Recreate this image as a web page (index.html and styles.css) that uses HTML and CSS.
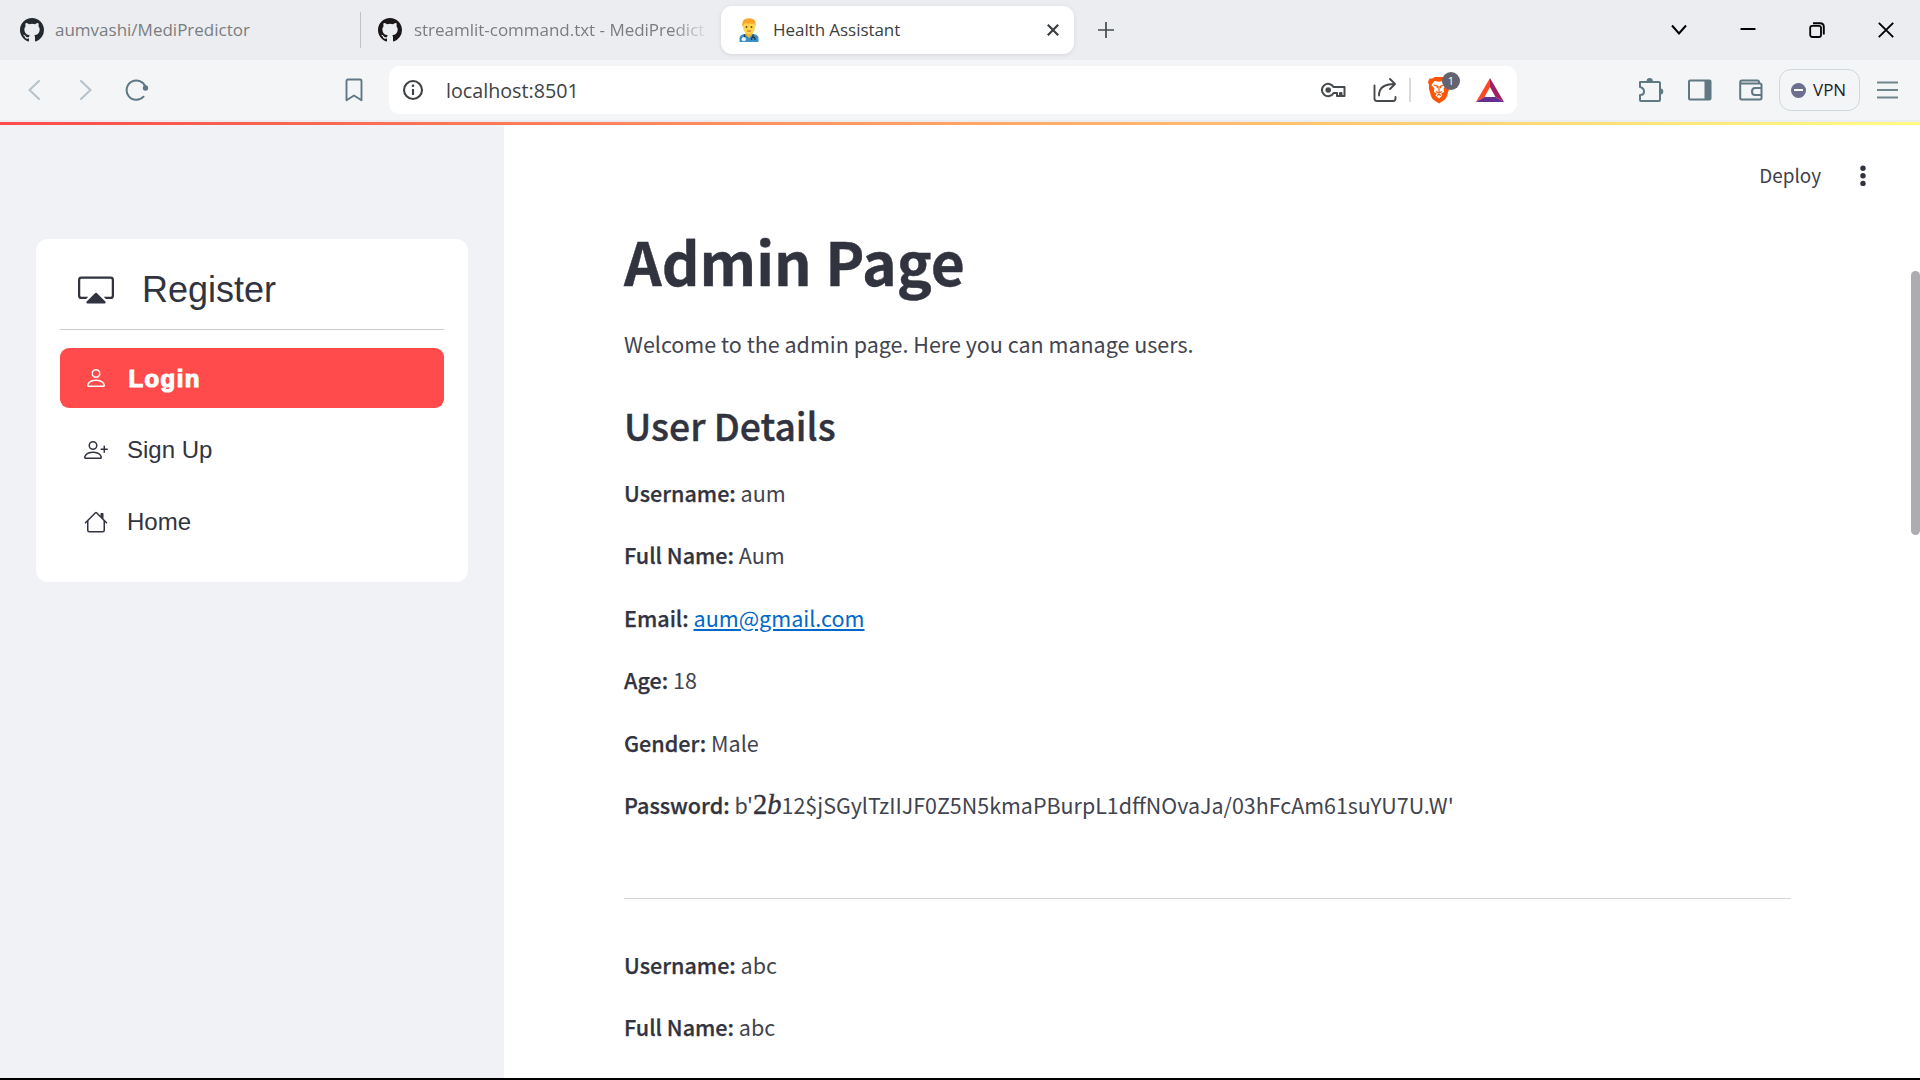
FILE: index.html
```html
<!DOCTYPE html>
<html lang="en">
<head>
<meta charset="utf-8">
<title>Health Assistant</title>
<link rel="stylesheet" href="styles.css">
</head>
<body>
<div class="window">
  <header class="tabs">
    <div class="tab tab-first">
      <svg class="favicon" width="24" height="24" viewBox="0 0 16 16" fill="#24292f"><path d="M8 0C3.58 0 0 3.58 0 8c0 3.54 2.29 6.53 5.47 7.59.4.07.55-.17.55-.38 0-.19-.01-.82-.01-1.49-2.01.37-2.53-.49-2.69-.94-.09-.23-.48-.94-.82-1.13-.28-.15-.68-.52-.01-.53.63-.01 1.08.58 1.23.82.72 1.21 1.87.87 2.33.66.07-.52.28-.87.51-1.07-1.78-.2-3.64-.89-3.64-3.95 0-.87.31-1.59.82-2.15-.08-.2-.36-1.02.08-2.12 0 0 .67-.21 2.2.82a7.6 7.6 0 0 1 4 0c1.53-1.04 2.2-.82 2.2-.82.44 1.1.16 1.92.08 2.12.51.56.82 1.27.82 2.15 0 3.07-1.87 3.75-3.65 3.95.29.25.54.73.54 1.48 0 1.07-.01 1.93-.01 2.2 0 .21.15.46.55.38A8.01 8.01 0 0 0 16 8c0-4.42-3.58-8-8-8z"/></svg>
      <span class="tab-title t1">aumvashi/MediPredictor</span>
    </div>
    <div class="tab tab-second">
      <svg class="favicon" width="24" height="24" viewBox="0 0 16 16" fill="#1b1718"><path d="M8 0C3.58 0 0 3.58 0 8c0 3.54 2.29 6.53 5.47 7.59.4.07.55-.17.55-.38 0-.19-.01-.82-.01-1.49-2.01.37-2.53-.49-2.69-.94-.09-.23-.48-.94-.82-1.13-.28-.15-.68-.52-.01-.53.63-.01 1.08.58 1.23.82.72 1.21 1.87.87 2.33.66.07-.52.28-.87.51-1.07-1.78-.2-3.64-.89-3.64-3.95 0-.87.31-1.59.82-2.15-.08-.2-.36-1.02.08-2.12 0 0 .67-.21 2.2.82a7.6 7.6 0 0 1 4 0c1.53-1.04 2.2-.82 2.2-.82.44 1.1.16 1.92.08 2.12.51.56.82 1.27.82 2.15 0 3.07-1.87 3.75-3.65 3.95.29.25.54.73.54 1.48 0 1.07-.01 1.93-.01 2.2 0 .21.15.46.55.38A8.01 8.01 0 0 0 16 8c0-4.42-3.58-8-8-8z"/></svg>
      <span class="tab-title t2">streamlit-command.txt - MediPredict</span>
    </div>
    <div class="tab tab-active">
      <svg class="favicon" width="24" height="24" viewBox="0 0 24 24"><path d="M2.5 24v-3.500q0-4 5-4.500h9q5 .5 5 4.500v3.500z" fill="#3b8fcb"/><path d="M8.500 13h7v3.500l-3.500 3.500-3.500-3.500z" fill="#f2b92e"/><ellipse cx="12" cy="9" rx="6" ry="7" fill="#ffd54a"/><path d="M5.500 9C4.500 3 7 .3 12 .3s7.700 2.700 6.500 8.700l-1.300-3.500q-5 1-7.700-.8-2.500.8-2.700 2.300z" fill="#fda52b"/><circle cx="9.500" cy="9" r=".9" fill="#60430f"/><circle cx="14.500" cy="9" r=".9" fill="#60430f"/><path d="M10 12.700q2 1.200 4 0" stroke="#cf5b3f" fill="none"/><path d="M7.500 16.500v3.500M16 16.500v3M14.500 22v-1.500q1.700-3 3.500 0V22" stroke="#263441" stroke-width="1.300" fill="none"/><circle cx="6.800" cy="21.200" r="2.100" fill="#eef5f8"/></svg>
      <span class="tab-title t3">Health Assistant</span>
      <svg class="tab-close" width="12" height="12" viewBox="0 0 12 12" stroke="#3b3e40" stroke-width="2.200"><path d="M.8.8l10.400 10.400M11.200.8L.8 11.200"/></svg>
    </div>
    <svg class="new-tab" width="16" height="16" viewBox="0 0 16 16" stroke="#45494c" stroke-width="1.700"><path d="M8 0v16M0 8h16"/></svg>
    <div class="controls">
      <svg width="16" height="16" viewBox="0 0 16 16" fill="none" stroke="#000" stroke-width="2"><path d="M1 3.500l7 8 7-8"/></svg>
      <svg width="16" height="16" viewBox="0 0 16 16" stroke="#000" stroke-width="2"><path d="M.5 7h15"/></svg>
      <svg width="16" height="16" viewBox="0 0 16 16" fill="none" stroke="#000" stroke-width="1.800"><rect x="1.200" y="3.800" width="10.800" height="11.200" rx="2"/><path d="M4 1.300h7.200q3.600 0 3.600 3.600v7.600" stroke-width="1.900"/></svg>
      <svg width="16" height="16" viewBox="0 0 16 16" stroke="#000" stroke-width="1.900"><path d="M.8.800l14.400 14.400M15.200.800L.8 15.200"/></svg>
    </div>
  </header>

  <nav class="toolbar">
    <svg class="nav-back" width="12" height="20" viewBox="0 0 12 20" fill="none" stroke="#b6c2c9" stroke-width="2" stroke-linecap="round"><path d="M11 1L1.500 10 11 19"/></svg>
    <svg class="nav-forward" width="12" height="20" viewBox="0 0 12 20" fill="none" stroke="#b6c2c9" stroke-width="2" stroke-linecap="round"><path d="M1 1l9.500 9L1 19"/></svg>
    <svg class="nav-reload" width="24" height="22" viewBox="0 0 24 22" fill="none" stroke="#607883" stroke-width="2" stroke-linecap="round"><path d="M18.500 17.700A9.700 9.700 0 1 1 20.500 8"/><circle cx="20.500" cy="9" r="2.700" fill="#607883" stroke="none"/></svg>
    <svg class="nav-bookmark" width="18" height="24" viewBox="0 0 18 24" fill="none" stroke="#607883" stroke-width="1.900" stroke-linejoin="round"><path d="M3 1.500h12q1.500 0 1.500 1.500v19.300L9 17.500l-7.500 4.800V3q0-1.500 1.500-1.500z"/></svg>
    <div class="address">
      <svg class="info" width="22" height="22" viewBox="0 0 22 22"><circle cx="11" cy="11" r="9" fill="none" stroke="#3e4244" stroke-width="2.100"/><path d="M11 10v6" stroke="#3e4244" stroke-width="2.100"/><circle cx="11" cy="6.800" r="1.300" fill="#3e4244"/></svg>
      <span class="url">localhost:8501</span>
      <svg class="key" width="26" height="16" viewBox="0 0 26 16" fill="none" stroke="#464a4d" stroke-width="2"><path d="M12.600 5A6.200 6.200 0 1 0 12.600 11H16v3h3v-3h1.500v3h3V5z" stroke-linejoin="round"/><circle cx="7.200" cy="8" r="2.800" fill="#464a4d" stroke="none"/></svg>
      <svg class="share" width="24" height="26" viewBox="0 0 24 26" fill="none" stroke="#464a4d" stroke-width="1.900" stroke-linecap="round" stroke-linejoin="round"><path d="M1.500 8.500v13q0 2.500 2.500 2.500h16q2.500 0 2.500-2.500v-1.500M6 18.500Q6 7 21.500 7M17 2l5 5-5 5"/></svg>
      <span class="divider"></span>
      <div class="shield">
        <svg width="24" height="28" viewBox="0 0 24 28"><path d="M5 2.500L8 1h8l3 1.500 3-.3L23 6l-1 3v4l-2 7q-1 3-3.500 4.500L12 27.500 7.500 24.500Q5 23 4 20L2 13V9L1 6l1.500-3.500z" fill="#fb5508"/><path d="M7.500 5l4.500.8 4.500-.8 3 4-3 3.500.6 3.500-3 1.500 1.300 2L12 22.500 8.500 19.500l1.300-2-3-1.500.6-3.500-3-3.500z" fill="#fff"/><path d="M6.500 9l4 1.200-.3 2M17.500 9l-4 1.200.3 2M12 10v6M9 15.500l3 1.500 3-1.500M10 19.500l2-1 2 1" fill="none" stroke="#fb5508" stroke-width="1.200"/></svg>
        <span class="badge">1</span>
      </div>
      <svg class="bat" width="28" height="24" viewBox="0 0 28 24"><path d="M14 0L0 24l8.500-5L14 9z" fill="#ff4724"/><path d="M14 0l14 24-8.500-5L14 9z" fill="#9e1f63"/><path d="M0 24h28l-8.500-5h-11z" fill="#662d91"/></svg>
    </div>
    <svg class="puzzle" width="26" height="26" viewBox="0 0 26 26" fill="none" stroke="#5f7882" stroke-width="2" stroke-linejoin="round"><path d="M2 5h19q1 0 1 1v17q0 1-1 1H3q-1 0-1-1v-5q4 0 4-3.500T2 10z"/><path d="M8.500 4.500a3.200 3.400 0 0 1 6.400 0zM22.500 11.500a2.800 3 0 0 1 0 6z" fill="#5f7882" stroke="none"/></svg>
    <svg class="panel" width="24" height="22" viewBox="0 0 24 22"><rect x="1" y="1.500" width="21.500" height="19" rx="1" fill="none" stroke="#5f7882" stroke-width="2"/><path d="M16.500 1.500h6v19h-6z" fill="#5f7882"/></svg>
    <svg class="wallet" width="24" height="22" viewBox="0 0 24 22" fill="none" stroke="#5f7882" stroke-width="2" stroke-linejoin="round"><path d="M20 4.500V3q0-1.500-1.500-1.500H3Q1.200 1.500 1.200 3v16q0 1.500 1.500 1.500H21q1.500 0 1.500-1.500V6q0-1.500-1.500-1.500H3.500Q1.200 4.500 1.200 3M22.500 9H16q-3 0-3 3.500T16 16h6.500"/></svg>
    <div class="vpn"><span class="vpn-dot"></span><span class="vpn-label">VPN</span></div>
    <svg class="menu" width="21" height="18" viewBox="0 0 21 18" stroke="#71858e" stroke-width="1.800"><path d="M0 1.500h21M0 9h21M0 16.500h21"/></svg>
  </nav>

  <div class="decoration"></div>

  <div class="app">
    <aside class="sidebar">
      <div class="card">
        <div class="card-head">
          <svg width="36" height="36" viewBox="0 0 16 16" fill="#31333f"><path d="m7.646 9.354-3.792 3.792a.5.5 0 0 0 .353.854h7.586a.5.5 0 0 0 .354-.854L8.354 9.354a.5.5 0 0 0-.708 0z"/><path d="M11.414 11H14.500a.5.5 0 0 0 .5-.5v-7a.5.5 0 0 0-.5-.5h-13a.5.5 0 0 0-.5.5v7a.5.5 0 0 0 .5.5h3.086l-1 1H1.500A1.500 1.500 0 0 1 0 10.500v-7A1.500 1.500 0 0 1 1.500 2h13A1.500 1.500 0 0 1 16 3.500v7a1.500 1.500 0 0 1-1.500 1.500h-2.086l-1-1z"/></svg>
          <span class="card-title">Register</span>
        </div>
        <ul class="menu-list">
          <li class="item item-active"><svg width="24" height="24" viewBox="0 0 16 16" fill="#fff"><path d="M8 8a3 3 0 1 0 0-6 3 3 0 0 0 0 6Zm2-3a2 2 0 1 1-4 0 2 2 0 0 1 4 0Zm4 8c0 1-1 1-1 1H3s-1 0-1-1 1-4 6-4 6 3 6 4Zm-1-.004c-.001-.246-.154-.986-.832-1.664C11.516 10.680 10.289 10 8 10c-2.290 0-3.516.680-4.168 1.332-.678.678-.830 1.418-.832 1.664h10Z"/></svg><span>Login</span></li>
          <li class="item"><svg width="24" height="24" viewBox="0 0 16 16" fill="#31333f"><path d="M6 8a3 3 0 1 0 0-6 3 3 0 0 0 0 6zm2-3a2 2 0 1 1-4 0 2 2 0 0 1 4 0zm4 8c0 1-1 1-1 1H1s-1 0-1-1 1-4 6-4 6 3 6 4zm-1-.004c-.001-.246-.154-.986-.832-1.664C9.516 10.680 8.289 10 6 10c-2.290 0-3.516.680-4.168 1.332-.678.678-.830 1.418-.832 1.664h10z"/><path d="M13.500 5a.5.5 0 0 1 .5.5V7h1.500a.5.5 0 0 1 0 1H14v1.500a.5.5 0 0 1-1 0V8h-1.500a.5.5 0 0 1 0-1H13V5.500a.5.5 0 0 1 .5-.5z"/></svg><span>Sign Up</span></li>
          <li class="item"><svg width="24" height="24" viewBox="0 0 16 16" fill="#31333f"><path d="M2 13.500V7h1v6.500a.5.5 0 0 0 .5.5h9a.5.5 0 0 0 .5-.5V7h1v6.500a1.500 1.500 0 0 1-1.500 1.500h-9A1.500 1.500 0 0 1 2 13.500zm11-11V6l-2-2V2.500a.5.5 0 0 1 .5-.5h1a.5.5 0 0 1 .5.5z"/><path d="M7.293 1.500a1 1 0 0 1 1.414 0l6.647 6.646a.5.5 0 0 1-.708.708L8 2.207 1.354 8.854a.5.5 0 1 1-.708-.708L7.293 1.500z"/></svg><span>Home</span></li>
        </ul>
      </div>
    </aside>

    <main class="main">
      <div class="app-bar">
        <span class="deploy">Deploy</span>
        <svg width="6" height="22" viewBox="0 0 6 22" fill="#31333f"><circle cx="3" cy="3.200" r="2.700"/><circle cx="3" cy="10.800" r="2.700"/><circle cx="3" cy="18.400" r="2.700"/></svg>
      </div>
      <div class="content">
        <h1>Admin Page</h1>
        <p class="intro">Welcome to the admin page. Here you can manage users.</p>
        <h2>User Details</h2>
        <section class="user">
          <p><b>Username:</b> aum</p>
          <p><b>Full Name:</b> Aum</p>
          <p><b>Email:</b> <a href="#">aum@gmail.com</a></p>
          <p><b>Age:</b> 18</p>
          <p><b>Gender:</b> Male</p>
          <p><b>Password:</b> b'<span class="math">2<i>b</i></span><span class="hash">12$jSGylTzIIJF0Z5N5kmaPBurpL1dffNOvaJa/03hFcAm61suYU7U.W'</span></p>
        </section>
        <hr>
        <section class="user user-next">
          <p><b>Username:</b> abc</p>
          <p><b>Full Name:</b> abc</p>
        </section>
      </div>
      <div class="scroll-thumb"></div>
    </main>
  </div>
</div>
</body>
</html>
```
FILE: styles.css
```css
* { box-sizing: border-box; }
body { margin: 0; background: #000; overflow: hidden; }
svg { display: block; flex: none; }
.window {
  width: 1920px; height: 1078px;
  display: flex; flex-direction: column;
  background: #fff; overflow: hidden;
}

/* tab strip */
.tabs {
  height: 60px; flex: none;
  display: flex; align-items: center;
  background: #ecedf1;
  font-family: "Open Sans", sans-serif; font-size: 17px; color: #7a7d80;
}
.tab { display: flex; align-items: center; }
.tab-first { width: 361px; height: 36px; padding-left: 20px; border-right: 1px solid #bfc1c5; }
.tab-second { width: 360px; padding-left: 17px; }
.tab-active {
  width: 353px; height: 48px; padding: 0 15px 0 16px;
  background: #fff; border-radius: 11px; color: #3b3e40;
  box-shadow: 0 1px 5px rgba(0, 0, 0, .09);
}
.tab-title { margin-left: 11px; white-space: nowrap; line-height: 24px; }
.t2 {
  width: 296px; margin-left: 12px; letter-spacing: -.02px;
  -webkit-mask-image: linear-gradient(to right, #000 258px, transparent 296px);
  mask-image: linear-gradient(to right, #000 258px, transparent 296px);
}
.t3 { margin-left: 12px; letter-spacing: -.05px; }
.tab-close { margin-left: auto; }
.new-tab { margin-left: 24px; }
.controls { display: flex; gap: 53px; margin-left: auto; padding-right: 26px; }

/* toolbar */
.toolbar {
  height: 62px; flex: none;
  display: flex; align-items: center;
  background: #f3f5f7; border-bottom: 2px solid #ecedf1;
}
.nav-back { margin-left: 28px; }
.nav-forward { margin-left: 40px; }
.nav-reload { margin-left: 33px; }
.nav-bookmark { margin-left: 196px; }
.address {
  width: 1128px; height: 48px; margin-left: 26px; padding-left: 13px;
  display: flex; align-items: center;
  background: #fff; border-radius: 11px;
}
.url {
  margin-left: 22px; width: 875px; padding-top: 1px;
  font-family: "Open Sans", sans-serif; font-size: 19.700px; line-height: 28px; color: #3e4244;
}
.share { margin-left: 26px; }
.divider { width: 2px; height: 24px; margin-left: 12px; background: #d9dadc; }
.shield { position: relative; margin-left: 16px; }
.badge {
  position: absolute; left: 15px; top: -4px;
  width: 18px; height: 18px; border-radius: 9px;
  background: #62646f; color: #fff;
  font: 11px/18px "Open Sans", sans-serif; text-align: center;
}
.bat { margin-left: 25px; }
.puzzle { margin-left: 121px; }
.panel { margin-left: 24px; }
.wallet { margin-left: 27px; }
.vpn {
  width: 81px; height: 42px; margin-left: 16px; padding-left: 11px;
  display: flex; align-items: center; gap: 7px;
  border: 1px solid #cfd8dd; border-radius: 12px;
}
.vpn-dot { width: 15px; height: 15px; border-radius: 50%; background: linear-gradient(#fff, #fff) center / 9px 2px no-repeat #6d6f91; }
.vpn-label { font: 17px/24px "Open Sans", sans-serif; color: #1d1f25; }
.menu { margin-left: 17px; }

.decoration { height: 3px; flex: none; background: linear-gradient(90deg, #ff4b4b, #fffd80); }

/* application */
.app { flex: 1; display: flex; min-height: 0; }
.sidebar { width: 504px; padding: 114px 36px 0; background: #f0f2f6; }
.card { height: 343px; padding: 24px 24px 0; background: #fff; border-radius: 12px; color: #31333f; font-family: "Liberation Sans", Arial, sans-serif; }
.card-head { display: flex; align-items: center; gap: 28px; height: 67px; padding: 0 18px 13px; border-bottom: 1px solid #c9cccf; }
.card-title { font-size: 36px; line-height: 50px; padding-top: 1px; }
.menu-list { margin: 18px 0 0; padding: 0; list-style: none; display: flex; flex-direction: column; gap: 12px; }
.item { height: 60px; padding-left: 24px; display: flex; align-items: center; gap: 19px; border-radius: 9px; font-size: 24px; line-height: 36px; }
.item-active { background: #ff4b4b; color: #fff; font-weight: bold; }
.item-active span { padding: 2px 0 0 1.500px; letter-spacing: 1.400px; -webkit-text-stroke: 1.200px #fff; }

.main { position: relative; flex: 1; color: #31333f; font-family: "Noto Sans CJK SC", sans-serif; }
.app-bar { height: 96px; padding: 6px 54px 0 0; display: flex; align-items: center; justify-content: flex-end; gap: 39px; }
.deploy { font-size: 18.900px; line-height: 28px; padding-bottom: 2px; color: #3f414c; }
.content { padding-left: 120px; width: 1287px; }
h1, h2, p { margin: 0; white-space: nowrap; }
h1 { font-size: 58.800px; line-height: 80px; font-weight: 700; -webkit-text-stroke: .4px #31333f; }
.intro { font-size: 21.500px; line-height: 36px; margin-top: 25px; color: #42444f; }
h2 { font-size: 37.300px; line-height: 50px; font-weight: 500; margin-top: 38px; -webkit-text-stroke: .4px #31333f; }
.user { display: flex; flex-direction: column; gap: 26.400px; margin-top: 25px; font-size: 21.550px; color: #42444f; }
.user-next { margin-top: 48px; }
.user p { height: 36px; line-height: 36px; }
.user b { font-weight: 500; color: #31333f; -webkit-text-stroke: .25px #31333f; }
a { color: #0068c9; text-decoration: underline; }
.math { font: 28.500px/1 "Liberation Serif", serif; color: #31333f; -webkit-text-stroke: .4px #31333f; }
.hash { font-size: 21.450px; }
hr { margin: 75px 0 0; border: 0; border-top: 1px solid #d6d6d9; }
.scroll-thumb { position: absolute; right: 0; top: 146px; width: 9px; height: 264px; border-radius: 5px; background: #adacb1; }
```
